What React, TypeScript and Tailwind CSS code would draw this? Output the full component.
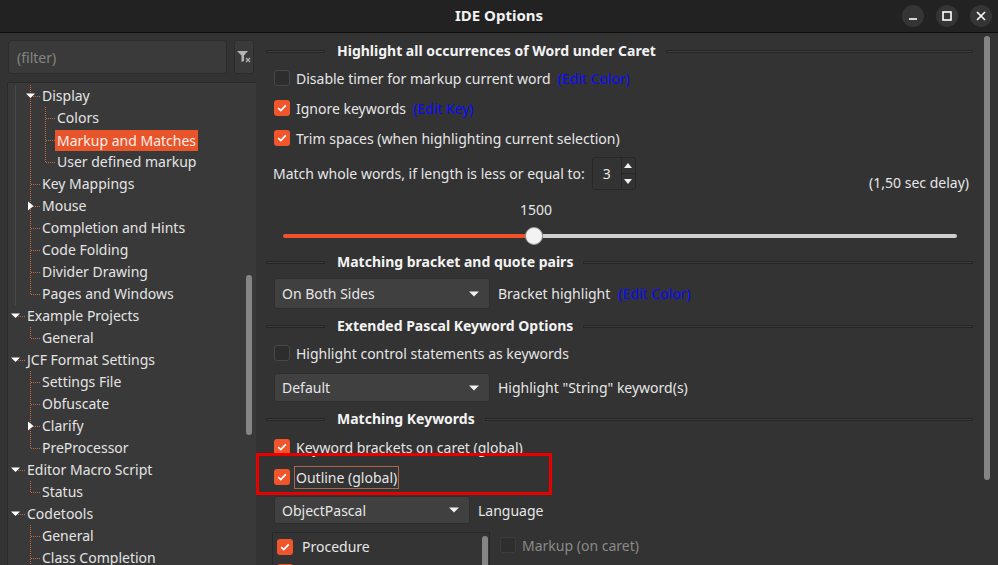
import React from 'react';

type Guide = { line?: 'full' | 'half' | 'gray'; exp?: 'down' | 'right'; last?: boolean };

type TreeRow = { label: string; cells: Guide[]; selected?: boolean };

const tree: TreeRow[] = [
  { label: 'Display', cells: [{ line: 'gray' }, { line: 'full', exp: 'down', last: true }] },
  { label: 'Colors', cells: [{ line: 'gray' }, { line: 'full' }, { line: 'full', last: true }] },
  { label: 'Markup and Matches', cells: [{ line: 'gray' }, { line: 'full' }, { line: 'full', last: true }], selected: true },
  { label: 'User defined markup', cells: [{ line: 'gray' }, { line: 'full' }, { line: 'half', last: true }] },
  { label: 'Key Mappings', cells: [{ line: 'gray' }, { line: 'full', last: true }] },
  { label: 'Mouse', cells: [{ line: 'gray' }, { line: 'full', exp: 'right', last: true }] },
  { label: 'Completion and Hints', cells: [{ line: 'gray' }, { line: 'full', last: true }] },
  { label: 'Code Folding', cells: [{ line: 'gray' }, { line: 'full', last: true }] },
  { label: 'Divider Drawing', cells: [{ line: 'gray' }, { line: 'full', last: true }] },
  { label: 'Pages and Windows', cells: [{ line: 'gray' }, { line: 'half', last: true }] },
  { label: 'Example Projects', cells: [{ exp: 'down', last: true }] },
  { label: 'General', cells: [{}, { line: 'half', last: true }] },
  { label: 'JCF Format Settings', cells: [{ exp: 'down', last: true }] },
  { label: 'Settings File', cells: [{}, { line: 'full', last: true }] },
  { label: 'Obfuscate', cells: [{}, { line: 'full', last: true }] },
  { label: 'Clarify', cells: [{}, { line: 'full', exp: 'right', last: true }] },
  { label: 'PreProcessor', cells: [{}, { line: 'half', last: true }] },
  { label: 'Editor Macro Script', cells: [{ exp: 'down', last: true }] },
  { label: 'Status', cells: [{}, { line: 'half', last: true }] },
  { label: 'Codetools', cells: [{ exp: 'down', last: true }] },
  { label: 'General', cells: [{}, { line: 'full', last: true }] },
  { label: 'Class Completion', cells: [{}, { line: 'full', last: true }] },
];

function GuideCell({ line, exp, last }: Guide) {
  const w = last ? 19 : 15;
  return (
    <svg width={w} height={22} className="shrink-0">
      {line === 'gray' && <line x1="7.5" y1="0" x2="7.5" y2="22" stroke="#4a4a4a" />}
      {line === 'full' && <line x1="7.5" y1="0" x2="7.5" y2="22" stroke="#c8683e" strokeDasharray="1 1" />}
      {line === 'half' && <line x1="7.5" y1="0" x2="7.5" y2="11" stroke="#c8683e" strokeDasharray="1 1" />}
      {last && <line x1="8" y1="11.5" x2="17" y2="11.5" stroke="#c8683e" strokeDasharray="1 1" />}
      {exp === 'down' && <polygon points="3,8.5 12,8.5 7.5,13" fill="#ffffff" />}
      {exp === 'right' && <polygon points="5,6.5 10.5,11 5,15.5" fill="#ffffff" />}
    </svg>
  );
}

function Check({ checked }: { checked?: boolean }) {
  if (checked) {
    return (
      <span className="w-4 h-4 shrink-0 rounded-[3px] bg-[#f0552b] flex items-center justify-center">
        <svg width="10" height="8" viewBox="0 0 10 8">
          <path d="M1.2 4.2 L3.8 6.6 L8.8 1.4" stroke="#ffffff" strokeWidth="1.8" fill="none" />
        </svg>
      </span>
    );
  }
  return <span className="w-4 h-4 shrink-0 rounded-[3px] bg-[#2d2d2d] border border-[#474747]" />;
}

function Header({ title }: { title: string }) {
  return (
    <div className="flex items-center h-[20px]">
      <div className="w-[59px] h-[3px] bg-[#3b3b3b] border border-[#262626]" />
      <span className="ml-[12px] font-bold text-[#f3f3f3] leading-[20px] whitespace-nowrap">{title}</span>
      <div className="flex-1 ml-[10px] h-[3px] bg-[#3b3b3b] border border-[#262626]" />
    </div>
  );
}

function Arrow() {
  return (
    <svg width="10" height="6" viewBox="0 0 10 6" className="shrink-0">
      <polygon points="0,0.5 10,0.5 5,5.5" fill="#f0f0f0" />
    </svg>
  );
}

function Combo({ value, className }: { value: string; className: string }) {
  return (
    <div className={`flex items-center justify-between rounded-[3px] bg-[#404040] border border-[#2e2e2e] pl-[7px] pr-[10px] ${className}`}>
      <span className="text-[#e6e6e6]">{value}</span>
      <Arrow />
    </div>
  );
}

function Link({ children }: { children: React.ReactNode }) {
  return <span className="text-[#0a0aff]">{children}</span>;
}

export default function App() {
  return (
    <div className="relative w-[998px] h-[565px] overflow-hidden bg-[#333333] flex flex-col font-['Noto_Sans',sans-serif] text-[14px] text-[#e6e6e6]">
      {/* title bar */}
      <div className="grid grid-cols-[1fr_auto_1fr] items-center h-[33px] bg-[#222222] border-b border-[#0d0d0d] shrink-0">
        <div />
        <span className="font-bold text-[15px] leading-[20px] text-[#f2f2f2] -mt-[2px]">IDE Options</span>
        <div className="flex justify-end items-center gap-[12px] pr-[6px]">
          <button className="w-[22px] h-[22px] rounded-full bg-[#353535] flex items-center justify-center">
            <svg width="10" height="10" viewBox="0 0 10 10">
              <line x1="1" y1="8" x2="9" y2="8" stroke="#ffffff" strokeWidth="1.6" />
            </svg>
          </button>
          <button className="w-[22px] h-[22px] rounded-full bg-[#353535] flex items-center justify-center">
            <svg width="10" height="10" viewBox="0 0 10 10">
              <rect x="1" y="1" width="8" height="8" stroke="#ffffff" strokeWidth="1.6" fill="none" />
            </svg>
          </button>
          <button className="w-[22px] h-[22px] rounded-full bg-[#353535] flex items-center justify-center">
            <svg width="10" height="10" viewBox="0 0 10 10">
              <path d="M1 1 L9 9 M9 1 L1 9" stroke="#ffffff" strokeWidth="1.6" />
            </svg>
          </button>
        </div>
      </div>

      <div className="flex flex-1 min-h-0">
        {/* left: filter + tree */}
        <div className="w-[256px] shrink-0 flex flex-col pl-[7px] pt-[7px]">
          <div className="flex items-center gap-[7px] ml-[1px] shrink-0">
            <div className="w-[219px] h-[34px] rounded-[3px] bg-[#3a3a3a] border border-[#2c2c2c] flex items-center pl-[8px]">
              <span className="text-[#858585]">(filter)</span>
            </div>
            <div className="w-[20px] h-[34px] rounded-[3px] bg-[#3a3a3a] border border-[#2c2c2c] flex items-center justify-center">
              <svg width="16" height="14" viewBox="0 0 16 14">
                <path d="M1 1 H12 L8 5.5 V11 L5.5 12 V5.5 Z" fill="#b4b4b4" />
                <path d="M10 8 L14 12 M14 8 L10 12" stroke="#b4b4b4" strokeWidth="1.2" />
              </svg>
            </div>
          </div>

          <div className="mt-[8px] flex-1 min-h-0 flex bg-[#393939] border-l border-t border-[#2a2a2a] overflow-hidden">
            <div className="flex-1 flex flex-col pt-[2px]">
              {tree.map((row, i) => (
                <div key={i} className="flex items-center h-[22px] shrink-0">
                  {row.cells.map((c, j) => (
                    <GuideCell key={j} {...c} />
                  ))}
                  {row.selected ? (
                    <span className="-ml-[2px] px-[2px] h-[21px] leading-[21px] bg-[#e9552a] text-[#fbeee9] whitespace-nowrap">{row.label}</span>
                  ) : (
                    <span className="leading-[22px] text-[#e4e4e4] whitespace-nowrap">{row.label}</span>
                  )}
                </div>
              ))}
            </div>
            <div className="w-[6px] mr-[4px] shrink-0">
              <div className="mt-[192px] h-[160px] rounded-full bg-[#858585]" />
            </div>
          </div>
        </div>

        {/* right: options page */}
        <div className="flex-1 flex pl-[10px] pr-[8px] overflow-hidden">
          <div className="w-[707px] shrink-0 pt-[8px]">
            <Header title="Highlight all occurrences of Word under Caret" />

            <div className="mt-[2px] pl-[8px]">
              <div className="flex items-center h-[30px] gap-[6px]">
                <Check />
                <span>Disable timer for markup current word</span>
                <span className="ml-[1px]"><Link>(Edit Color)</Link></span>
              </div>
              <div className="flex items-center h-[30px] gap-[6px]">
                <Check checked />
                <span>Ignore keywords</span>
                <span className="ml-[1px]"><Link>(Edit Key)</Link></span>
              </div>
              <div className="flex items-center h-[30px] gap-[6px]">
                <Check checked />
                <span>Trim spaces (when highlighting current selection)</span>
              </div>
            </div>

            <div className="mt-[4px] h-[34px] flex items-start justify-between pl-[7px] pr-[4px]">
              <div className="flex items-center gap-[7px]">
                <span>Match whole words, if length is less or equal to:</span>
                <div className="w-[44px] h-[33px] flex rounded-[3px] bg-[#333333] border border-[#272727]">
                  <span className="w-[28px] flex items-center pl-[10px]">3</span>
                  <div className="flex-1 flex flex-col border-l border-[#272727]">
                    <div className="flex-1 flex items-center justify-center border-b border-[#272727]">
                      <svg width="8" height="5" viewBox="0 0 8 5"><polygon points="0,5 8,5 4,0" fill="#f0f0f0" /></svg>
                    </div>
                    <div className="flex-1 flex items-center justify-center">
                      <svg width="8" height="5" viewBox="0 0 8 5"><polygon points="0,0 8,0 4,5" fill="#f0f0f0" /></svg>
                    </div>
                  </div>
                </div>
              </div>
              <span className="mt-[18px] leading-[16px]">(1,50 sec delay)</span>
            </div>

            <div className="mt-[9px] h-[20px] flex items-center pl-[254px]">
              <span className="leading-[20px]">1500</span>
            </div>

            <div className="mt-[4px] h-[24px] flex items-center pl-[17px]">
              <div className="w-[242px] h-[4px] rounded-l-full bg-[#f0522a]" />
              <div className="w-[18px] h-[18px] shrink-0 rounded-full bg-[#f3f3f3] border border-[#9a9a9a]" />
              <div className="w-[414px] h-[4px] rounded-r-full bg-[#d0d0d0]" />
            </div>

            <div className="mt-[4px]">
              <Header title="Matching bracket and quote pairs" />
            </div>

            <div className="mt-[6px] flex items-center gap-[8px] pl-[8px]">
              <Combo value="On Both Sides" className="w-[216px] h-[31px]" />
              <span>Bracket highlight</span>
              <Link>(Edit Color)</Link>
            </div>

            <div className="mt-[7px]">
              <Header title="Extended Pascal Keyword Options" />
            </div>

            <div className="mt-[2px] flex items-center h-[30px] gap-[6px] pl-[8px]">
              <Check />
              <span>Highlight control statements as keywords</span>
            </div>

            <div className="mt-[5px] flex items-center gap-[8px] pl-[8px]">
              <Combo value="Default" className="w-[216px] h-[29px]" />
              <span>Highlight "String" keyword(s)</span>
            </div>

            <div className="mt-[7px]">
              <Header title="Matching Keywords" />
            </div>

            <div className="mt-[3px] pl-[8px]">
              <div className="flex items-center h-[30px] gap-[6px]">
                <Check checked />
                <span>Keyword brackets on caret (global)</span>
              </div>
              <div className="flex items-center h-[30px] gap-[4px]">
                <Check checked />
                <span className="px-[1px] h-[23px] leading-[21px] border border-[#a9684c]">Outline (global)</span>
              </div>
            </div>

            <div className="mt-[4px] flex items-center gap-[8px] pl-[8px]">
              <Combo value="ObjectPascal" className="w-[196px] h-[28px]" />
              <span>Language</span>
            </div>

            <div className="mt-[8px] flex items-start pl-[6px] gap-[10px]">
              <div className="w-[218px] h-[60px] flex border border-[#272727] bg-[#343434]">
                <div className="flex-1 flex flex-col pl-[4px] pt-[1px]">
                  <div className="flex items-center h-[25px] gap-[9px] shrink-0">
                    <Check checked />
                    <span>Procedure</span>
                  </div>
                  <div className="flex items-center h-[25px] shrink-0">
                    <Check checked />
                  </div>
                </div>
                <div className="w-[6px] mr-[1px] pt-[3px]">
                  <div className="h-[60px] rounded-full bg-[#858585]" />
                </div>
              </div>
              <div className="flex items-center gap-[6px] mt-[5px] h-[16px]">
                <span className="w-4 h-4 shrink-0 rounded-[3px] bg-[#2e2e2e] border border-[#3d3d3d]" />
                <span className="text-[#8a8a8a]">Markup (on caret)</span>
              </div>
            </div>
          </div>

          <div className="ml-[11px] w-[6px] shrink-0 pt-[3px]">
            <div className="h-[444px] rounded-full bg-[#858585]" />
          </div>
        </div>
      </div>

      {/* annotation box */}
      <div className="absolute left-[256px] top-[453px] w-[296px] h-[42px] border-[3px] border-[#e60000] pointer-events-none" />
    </div>
  );
}
